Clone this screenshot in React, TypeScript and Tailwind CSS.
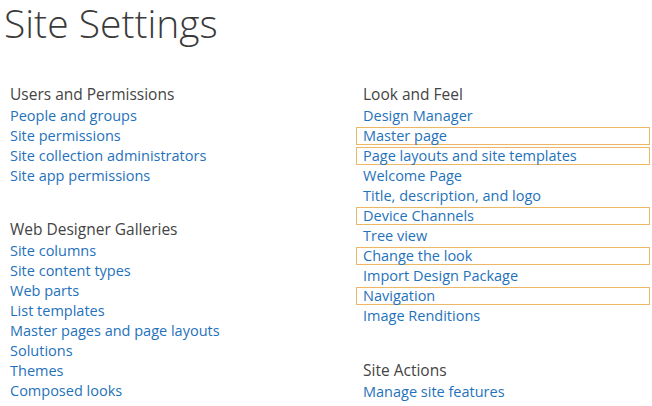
import React from "react";

const font = { fontFamily: '"Open Sans", "Noto Sans", sans-serif' };

function LinkRow({ label, boxed }: { label: string; boxed?: boolean }) {
  if (boxed) {
    return (
      <div className="h-5 flex items-center">
        <div className="-ml-[7px] mr-[2px] flex-1 h-[18px] border border-[#ecb866] pl-[6px] flex items-center">
          <span className="text-[14.5px] leading-5 text-[#1f72bb]">{label}</span>
        </div>
      </div>
    );
  }
  return (
    <div className="h-5 flex items-center">
      <span className="text-[14.5px] leading-5 text-[#1f72bb]">{label}</span>
    </div>
  );
}

function Heading({ label, className = "" }: { label: string; className?: string }) {
  return (
    <div className={`h-5 flex items-center mb-[2px] ${className}`}>
      <span className="text-[15.5px] leading-5 text-[#444444]">{label}</span>
    </div>
  );
}

export default function App() {
  return (
    <div className="w-[652px] h-[406px] bg-white overflow-hidden" style={font}>
      <div className="pl-[4px] h-[48px] text-[39px] leading-[46px] font-light text-[#3a3a3a]">
        Site Settings
      </div>
      <div className="mt-[36px] grid grid-cols-[363px_1fr]">
        <div className="pl-[10px] flex flex-col">
          <Heading label="Users and Permissions" />
          <LinkRow label="People and groups" />
          <LinkRow label="Site permissions" />
          <LinkRow label="Site collection administrators" />
          <LinkRow label="Site app permissions" />
          <Heading label="Web Designer Galleries" className="mt-[33px]" />
          <LinkRow label="Site columns" />
          <LinkRow label="Site content types" />
          <LinkRow label="Web parts" />
          <LinkRow label="List templates" />
          <LinkRow label="Master pages and page layouts" />
          <LinkRow label="Solutions" />
          <LinkRow label="Themes" />
          <LinkRow label="Composed looks" />
        </div>
        <div className="flex flex-col">
          <Heading label="Look and Feel" />
          <LinkRow label="Design Manager" />
          <LinkRow label="Master page" boxed />
          <LinkRow label="Page layouts and site templates" boxed />
          <LinkRow label="Welcome Page" />
          <LinkRow label="Title, description, and logo" />
          <LinkRow label="Device Channels" boxed />
          <LinkRow label="Tree view" />
          <LinkRow label="Change the look" boxed />
          <LinkRow label="Import Design Package" />
          <LinkRow label="Navigation" boxed />
          <LinkRow label="Image Renditions" />
          <Heading label="Site Actions" className="mt-[34px]" />
          <LinkRow label="Manage site features" />
        </div>
      </div>
    </div>
  );
}
